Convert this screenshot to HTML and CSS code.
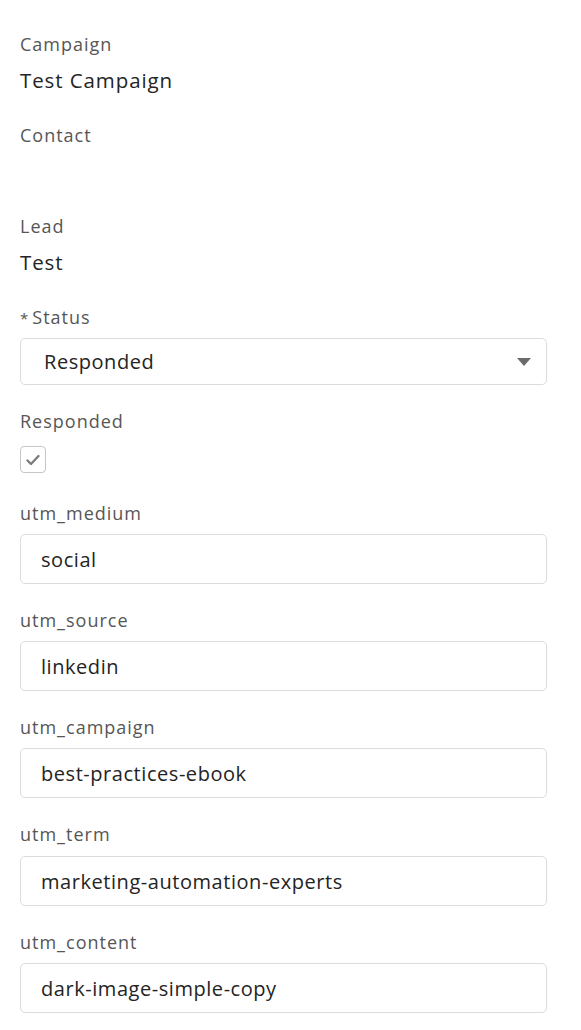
FILE: index.html
```html
<!DOCTYPE html>
<html>
<head>
<meta charset="utf-8">
<link rel="stylesheet" href="styles.css">
</head>
<body>
<div class="form">
  <div class="field">
    <div class="label">Campaign</div>
    <div class="value">Test Campaign</div>
  </div>
  <div class="field">
    <div class="label">Contact</div>
    <div class="value"></div>
  </div>
  <div class="field">
    <div class="label">Lead</div>
    <div class="value">Test</div>
  </div>
  <div class="field field-input">
    <div class="label"><span class="req">*</span>Status</div>
    <div class="select">
      <span class="select-text">Responded</span>
      <svg class="arrow" width="14" height="8" viewBox="0 0 14 8"><path d="M0 0H14L7 8Z" fill="#6b6b6b"/></svg>
    </div>
  </div>
  <div class="field field-check">
    <div class="label">Responded</div>
    <div class="checkbox">
      <svg width="14" height="12" viewBox="0 0 14 12"><path d="M1.5 6.5L5 10L12.5 2" fill="none" stroke="#7a7a7a" stroke-width="2.3" stroke-linecap="round" stroke-linejoin="round"/></svg>
    </div>
  </div>
  <div class="field field-input">
    <div class="label">utm_medium</div>
    <div class="input">social</div>
  </div>
  <div class="field field-input">
    <div class="label">utm_source</div>
    <div class="input">linkedin</div>
  </div>
  <div class="field field-input">
    <div class="label">utm_campaign</div>
    <div class="input">best-practices-ebook</div>
  </div>
  <div class="field field-input field-term">
    <div class="label">utm_term</div>
    <div class="input">marketing-automation-experts</div>
  </div>
  <div class="field field-input">
    <div class="label">utm_content</div>
    <div class="input">dark-image-simple-copy</div>
  </div>
</div>
</body>
</html>
```
FILE: styles.css
```css
html, body {
  margin: 0;
  padding: 0;
  background: #ffffff;
}
body {
  font-family: "Open Sans", "Noto Sans", sans-serif;
}
.form {
  padding: 32px 34px 0 20px;
  display: flex;
  flex-direction: column;
}
.field {
  display: flex;
  flex-direction: column;
  margin-bottom: 29px;
}
.field-input {
  margin-bottom: 24px;
}
.field-check {
  margin-bottom: 28px;
}
.label {
  font-size: 18px;
  line-height: 24px;
  letter-spacing: 1px;
  color: #565656;
}
.req {
  margin-right: 4px;
  font-size: 15px;
  letter-spacing: 0;
}
.value {
  margin-top: 10px;
  font-size: 20.5px;
  line-height: 28px;
  letter-spacing: 0.9px;
  min-height: 28px;
  color: #242424;
}
.select, .input {
  box-sizing: border-box;
  border: 1px solid #dcdcdc;
  border-radius: 5px;
  font-size: 20px;
  letter-spacing: 0.55px;
  color: #242424;
  display: flex;
  align-items: center;
}
.select {
  margin-top: 8px;
  height: 47px;
  padding: 0 15px 0 23px;
  justify-content: space-between;
}
.input {
  margin-top: 9px;
  height: 50px;
  padding: 0 20px;
}
.field-term .input {
  margin-top: 10px;
}
.checkbox {
  margin-top: 13px;
  width: 26px;
  height: 27px;
  box-sizing: border-box;
  border: 1px solid #c6c6c6;
  border-radius: 4px;
  display: flex;
  align-items: center;
  justify-content: center;
}
```
